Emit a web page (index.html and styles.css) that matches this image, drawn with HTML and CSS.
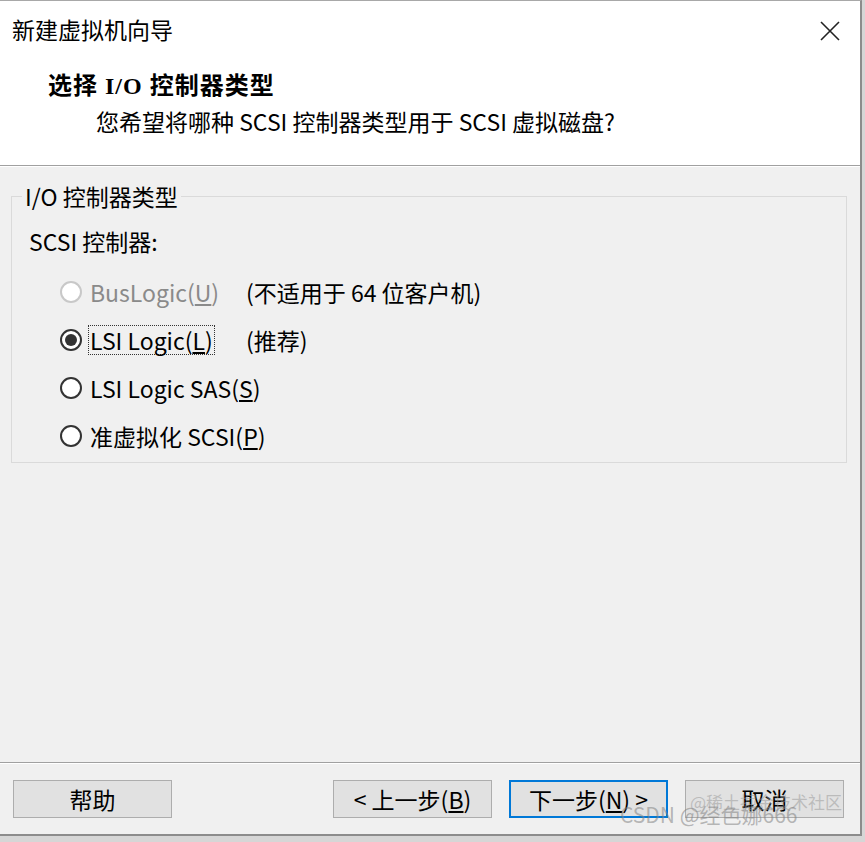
FILE: index.html
```html
<!DOCTYPE html>
<html lang="zh-CN">
<head>
<meta charset="utf-8">
<title>新建虚拟机向导</title>
<link rel="stylesheet" href="styles.css">
</head>
<body>
<div class="dialog">
  <div class="header">
    <div class="titlebar">
      <span class="title">新建虚拟机向导</span>
      <svg class="close" width="20" height="20" viewBox="0 0 20 20"><path d="M1 1L19 19M19 1L1 19" stroke="#222" stroke-width="1.6" fill="none"/></svg>
    </div>
    <div class="heading">选择 I/O 控制器类型</div>
    <div class="subtitle">您希望将哪种 SCSI 控制器类型用于 SCSI 虚拟磁盘?</div>
  </div>
  <div class="body">
    <fieldset class="group">
      <legend class="legend">I/O 控制器类型</legend>
      <div class="caption">SCSI 控制器:</div>
      <div class="options">
        <div class="row disabled">
          <span class="radio"></span>
          <span class="label">BusLogic(<u>U</u>)</span>
          <span class="note">(不适用于 64 位客户机)</span>
        </div>
        <div class="row">
          <span class="radio checked"></span>
          <span class="label"><span class="focus">LSI Logic(<u>L</u>)</span></span>
          <span class="note">(推荐)</span>
        </div>
        <div class="row">
          <span class="radio"></span>
          <span class="label wide">LSI Logic SAS(<u>S</u>)</span>
        </div>
        <div class="row">
          <span class="radio"></span>
          <span class="label wide">准虚拟化 SCSI(<u>P</u>)</span>
        </div>
      </div>
    </fieldset>
  </div>
  <div class="footer">
    <button class="btn">帮助</button>
    <div class="nav">
      <button class="btn">&lt; 上一步(<u>B</u>)</button>
      <button class="btn primary">下一步(<u>N</u>) &gt;</button>
      <button class="btn">取消</button>
    </div>
    <span class="wm wm1">@稀土掘金技术社区</span>
    <span class="wm wm2">CSDN @经色娜666</span>
  </div>
</div>
</body>
</html>
```
FILE: styles.css
```css
html, body {
  margin: 0;
  padding: 0;
}
body {
  background: #d6d6d6;
  width: 865px;
  height: 842px;
  overflow: hidden;
  font-family: "Noto Sans CJK SC", "Noto Sans", sans-serif;
  font-size: 23px;
  color: #000;
}
.dialog {
  position: relative;
  width: 862px;
  height: 836px;
  box-sizing: border-box;
  background: #f0f0f0;
  border-top: 1px solid #a8a8a8;
  border-right: 2px solid #8c8c8c;
  border-bottom: 2px solid #8c8c8c;
  display: flex;
  flex-direction: column;
}
.header {
  background: #fff;
  height: 164px;
  border-bottom: 1px solid #a0a0a0;
  box-shadow: 0 1px 0 #fff;
  box-sizing: content-box;
}
.titlebar {
  display: flex;
  align-items: center;
  justify-content: space-between;
  height: 30px;
  padding: 13px 20px 0 12px;
  line-height: 30px;
}
.close {
  margin-top: 3px;
}
.heading {
  margin-top: 27px;
  padding-left: 48px;
  line-height: 30px;
  font-family: "Liberation Serif", "Noto Sans CJK SC", serif;
  font-weight: bold;
  font-size: 24px;
  letter-spacing: 1px;
}
.subtitle {
  margin-top: 5px;
  padding-left: 96px;
  line-height: 30px;
}
.body {
  flex: 1;
  padding: 15px 13px 0 11px;
}
.group {
  margin: 0;
  padding: 15px 0 2px 0;
  border: 1px solid #dadada;
  min-width: 0;
}
.legend {
  margin-left: 10px;
  padding: 0 3px;
  line-height: 30px;
}
.caption {
  padding-left: 17px;
  line-height: 30px;
}
.options {
  margin-top: 12px;
  padding-left: 48px;
}
.row {
  display: flex;
  align-items: center;
  height: 48px;
}
.radio {
  width: 22px;
  height: 22px;
  box-sizing: border-box;
  border: 2px solid #333;
  border-radius: 50%;
  background: #fff;
  margin-right: 8px;
  position: relative;
  flex: none;
}
.radio.checked::after {
  content: "";
  position: absolute;
  left: 3px;
  top: 3px;
  width: 12px;
  height: 12px;
  border-radius: 50%;
  background: #333;
}
.disabled .radio {
  border-color: #c8c8c8;
}
.disabled {
  color: #8a8a8a;
}
.disabled .note {
  color: #000;
}
.label {
  width: 156px;
  flex: none;
  line-height: 28px;
}
.label.wide {
  width: auto;
}
.focus {
  display: inline-block;
  margin-left: -2px;
  padding: 0 1px;
  border: 1px dotted #333;
  line-height: 28px;
}
.note {
  line-height: 28px;
}
.footer {
  position: relative;
  height: 54px;
  border-top: 1px solid #a0a0a0;
  box-shadow: inset 0 1px 0 #fff;
  padding: 17px 16px 0 13px;
  display: flex;
}
.nav {
  margin-left: auto;
  display: flex;
  gap: 17px;
}
.btn {
  width: 159px;
  height: 38px;
  box-sizing: border-box;
  background: #e1e1e1;
  border: 1px solid #adadad;
  font-family: "Noto Sans CJK SC", "Noto Sans", sans-serif;
  font-size: 23px;
  color: #000;
  padding: 0;
  line-height: 34px;
}
.btn.primary {
  border: 2px solid #0078d7;
}
.wm {
  position: absolute;
  white-space: nowrap;
  pointer-events: none;
}
.wm1 {
  left: 690px;
  top: 26px;
  font-size: 17px;
  color: rgba(150, 150, 150, 0.5);
}
.wm2 {
  left: 620px;
  top: 36px;
  font-size: 21px;
  color: rgba(130, 130, 130, 0.55);
}
```
